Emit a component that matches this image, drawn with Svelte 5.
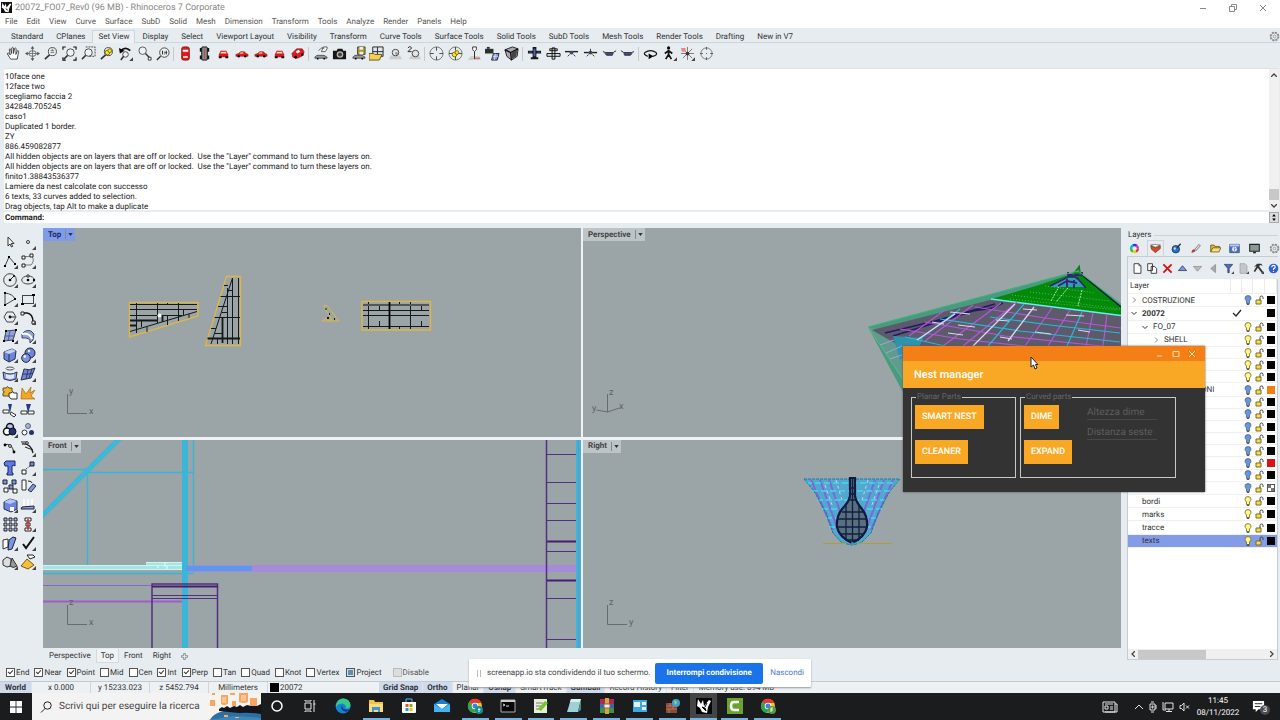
<script>
const menus = ['File', 'Edit', 'View', 'Curve', 'Surface', 'SubD', 'Solid', 'Mesh', 'Dimension', 'Transform', 'Tools', 'Analyze', 'Render', 'Panels', 'Help'];
const tabs = ['Standard', 'CPlanes', 'Set View', 'Display', 'Select', 'Viewport Layout', 'Visibility', 'Transform', 'Curve Tools', 'Surface Tools', 'Solid Tools', 'SubD Tools', 'Mesh Tools', 'Render Tools', 'Drafting', 'New in V7'];

const history = [
    '10face one',
    '12face two',
    'scegliamo faccia 2',
    '342848.705245',
    'caso1',
    'Duplicated 1 border.',
    'ZY',
    '886.459082877',
    'All hidden objects are on layers that are off or locked.  Use the "Layer" command to turn these layers on.',
    'All hidden objects are on layers that are off or locked.  Use the "Layer" command to turn these layers on.',
    'finito1.38843536377',
    'Lamiere da nest calcolate con successo',
    '6 texts, 33 curves added to selection.',
    'Drag objects, tap Alt to make a duplicate'
];

const glass = '<circle cx="10" cy="6" r="4.3" fill="#eef2f4" stroke="#444"/><path d="M7 9.5L2 14" stroke="#333" stroke-width="1.8"/>';
const corner = '<path d="M16 12v4h-4z" fill="#444"/>';
const carSide = '<path d="M2 9l3-1 2-2h4l2 2 2 1v2H2z" fill="#e01818" stroke="#7a0c0c" stroke-width=".5"/><path d="M7 7h3v1H6z" fill="#fff"/><circle cx="5" cy="11" r="1.3"/><circle cx="12" cy="11" r="1.3"/>';
const carFront = '<path d="M5 5h6l2 4v3H3V9z" fill="#d81818"/><path d="M5.5 6h5l1 2h-7z" fill="#f4d0d0"/><path d="M3 11h3v2H3zM10 11h3v2h-3z" fill="#111"/>';
const greyCar = '<path d="M2 12l2-2h8l3 2v1H2z" fill="#999" stroke="#333" stroke-width=".8"/><circle cx="5" cy="13.5" r="1"/><circle cx="12" cy="13.5" r="1"/>';
const target = '<circle cx="8" cy="8" r="7" fill="none" stroke="#777"/><path d="M8 1v4M8 11v4M1 8h4M11 8h4" stroke="#444"/>';
const heli = '<path d="M1 6l3 1h8l3-2" fill="none" stroke="#222"/><path d="M3 8h9l-1 2H5z" stroke="#222" stroke-width=".6" fill="#384094"/>';

const icons = {
    hand: '<path d="M5 14L1.5 8.5q0-1.5 1.5-1l1.5 2-1-6q.5-1.2 1.5 0L6 8l.2-6q1-1.2 1.700 0L8 8l1.200-5.500q1-.8 1.600.2L10.500 9l1.700-4q1.300-.3 1.200 1L12 14z" fill="#fff" stroke="#333" stroke-width=".9"/>',
    orbit: '<path d="M8 1v14M1 8h14" stroke="#777"/><path d="M8 0L6 3h4zM8 16l-2-3h4zM0 8l3-2v4zM16 8l-3-2v4z" fill="#555"/><ellipse cx="8" cy="8" rx="4" ry="3" fill="none" stroke="#666"/>',
    zoomDyn: glass + '<path d="M8 5h4M8 7h4M10 3v2" stroke="#555" stroke-width=".8"/>',
    zoomExt: '<circle cx="9" cy="7" r="4" fill="#eef2f4" stroke="#444"/><path d="M6 10l-4 4" stroke="#333" stroke-width="1.6"/><path d="M1 4V1h3M12 1h3v3M15 12v3h-3M1 12v3h3" fill="none" stroke="#111" stroke-width="1.2"/>',
    zoomWin: '<circle cx="8" cy="7" r="4" fill="#eef2f4" stroke="#444"/><path d="M5 10l-4 4" stroke="#333" stroke-width="1.6"/><path d="M5 1h10v10H9" fill="none" stroke="#444" stroke-dasharray="2 1"/>',
    zoomSel: glass + '<circle cx="9" cy="7" r="2.5" fill="#ffe620" stroke="#776800"/><circle cx="11.5" cy="5" r="2" fill="#ffe620" stroke="#776800"/>',
    undoView: '<path d="M3 5q5-5 10 0" fill="none" stroke="#111" stroke-width="2"/><path d="M1 2l1 6 5-3z"/><circle cx="8" cy="9" r="3" fill="#eef2f4" stroke="#444"/><path d="M6 11l-3 4" stroke="#333" stroke-width="1.6"/>' + corner,
    zoomTgt: '<circle cx="6" cy="5" r="4" fill="#eef2f4" stroke="#555"/><path d="M9 8l5 5" stroke="#333" stroke-width="1.5"/><path d="M12 12h3v3h-3z" fill="#fff" stroke="#333"/>',
    zoom11: '<circle cx="10" cy="7" r="5" fill="#eef2f4" stroke="#444"/><path d="M6 11l-4 4" stroke="#333" stroke-width="1.6"/><path d="M8 5v4M12 5v4M10 6v1M10 8v1M11 7h2" stroke="#222"/>',
    carTop: '<rect x="4" y="1" width="8" height="14" rx="2" fill="#df1c1c" stroke="#8a0f0f"/><path d="M5 4h6v2H5zM5.5 11h5v1.5h-5z" fill="#fff"/>',
    carBottom: '<rect x="5" y="1" width="6" height="14" rx="1" fill="#888" stroke="#111"/><path d="M4 2v4M12 2v4M4 10v4M12 10v4" stroke="#111" stroke-width="2"/><path d="M8 3v10" stroke="#c44"/>',
    carFront, carSide,
    carPersp: '<path d="M2 8l5-5 6 0 2 3-1 4-6 3-5-1z" fill="#df1c1c" stroke="#7a0c0c" stroke-width=".6"/><path d="M6 6l3-2 2 2-3 2z" fill="#fff"/><circle cx="6" cy="12" r="1.5"/><circle cx="13" cy="9" r="1.3"/>',
    planCar: greyCar + '<path d="M6 5q4-5 6-2M9 6h4l2-3V1h-4z" fill="#fff" stroke="#333" stroke-width=".8"/>',
    camera: '<path d="M1 5h4l1-2h5l1 2h3v9H1z" fill="#161616"/><circle cx="8.5" cy="9" r="3.5" fill="#bbb"/><circle cx="8.5" cy="9" r="2.2" fill="#444"/>',
    saveView: greyCar + '<path d="M7 1h8v8H7z" fill="#a89a28" stroke="#444"/><path d="M9 1h4v3H9zM9 6h4v3H9z" fill="#eee"/>',
    namedViews: '<path d="M4 1h11v10H4zM9 1v10M4 6h11" fill="#dfe6ec" stroke="#222"/><path d="M0 8h5l1 1h8l-3 6H0z" fill="#f3cf58" stroke="#6e5510"/>',
    sphere: '<path d="M3 10h10l2 4H1z" fill="#ccc"/><circle cx="8" cy="7" r="3.5" fill="#e4e4e4" stroke="#444"/><circle cx="9" cy="8" r="1.5" fill="#999"/>',
    sphere2: '<path d="M4 10h9l2 4H2z" fill="#ccc"/><circle cx="9" cy="8" r="3.5" fill="#e4e4e4" stroke="#444"/><path d="M1 2q2-3 4 0L1 6h4" fill="none" stroke="#222"/>',
    target,
    targetSel: target + '<circle cx="7" cy="9" r="2.5" fill="#ffe620" stroke="#776800"/><circle cx="9.5" cy="7" r="2" fill="#ffe620" stroke="#776800"/>',
    camPlane: '<path d="M1 15l3-4h9l2 4z" fill="#ccc"/><path d="M8 6v8" stroke="#222"/><path d="M8 13h6" stroke="#d44"/><path d="M6 1h4v3l-2 2-2-2z" fill="#fff" stroke="#333"/>',
    camObj: '<path d="M0 3h9v5H0z" fill="#2b302b"/><path d="M2 1h3v2H2z" fill="#2b302b"/><path d="M9 8h6l-2 7H7z" fill="#8799dc" stroke="#223"/><path d="M8 11h6M11 8l-1 7" stroke="#fff" stroke-width=".6"/>',
    cube: '<path d="M1 4l8-3 6 2-1 8-6 4-5-4z" fill="#aaa" stroke="#222"/><path d="M1 4l6 3 8-4M7 7l1 8" fill="none" stroke="#111" stroke-width="1.5"/><path d="M8 7l6-3-1 7-5 3z" fill="#444"/>',
    planeTop: '<path d="M1 5h14v3H1zM6 1h4v12H6zM4 12h8v2H4z" fill="#15181c"/><path d="M7 3h2v8H7zM2 6h3v1H2zM11 6h3v1h-3z" fill="#5464a8"/>',
    planeBottom: '<path d="M1 8h14v3H1zM6.5 2h3v12h-3zM4 3h8v2H4z" fill="#ddd" stroke="#111"/>',
    planeFront: '<path d="M1 6h14" stroke="#222" stroke-width="1.5"/><circle cx="8" cy="7" r="2" fill="#446"/><path d="M6 9l-2 2M10 9l2 2" stroke="#333"/>',
    planeBack: '<path d="M1 7h14" stroke="#222" stroke-width="1.5"/><circle cx="8" cy="7" r="2" fill="#446"/><path d="M8 3v4M6 9l-2 2M10 9l2 2" stroke="#333"/>',
    heliL: heli,
    heliR: '<g transform="matrix(-1 0 0 1 16 0)">' + heli + '</g>',
    turn: '<path d="M5 11Q0 9 2 7q6-4 12 0 2 3-4 4" fill="none" stroke="#111" stroke-width="1.3"/><path d="M6 8l5 3-5 3z"/>',
    walk: '<circle cx="7" cy="2" r="1.7"/><path d="M7 4v5l-3 5M7 9l3 5M7 5L3 8M7 5l4 3" fill="none" stroke="#111" stroke-width="1.8"/>' + corner,
    compass: '<path d="M8 1v14M1 8h14M3 3l10 10M13 3L3 13" stroke="#777"/><circle cx="8" cy="8" r="2" fill="#333"/><path d="M1 2h5v4H2z" fill="#e88"/>' + corner,
    circleDot: '<circle cx="8" cy="8" r="6" fill="none" stroke="#777"/><path d="M8 1v3M8 12v3M1 8h3M12 8h3M7.5 8h1" stroke="#555"/>',
    arrow: '<path d="M6 3v9l2-2 1.5 3 1.2-.6L9.3 9.5H12z" fill="#fff" stroke="#333"/>',
    point: '<circle cx="8" cy="8" r="1.5" fill="#fff" stroke="#333"/>' + corner,
    polyline: '<path d="M3 13l4-9 6 7" fill="none" stroke="#444"/><path d="M2 12h2v2H2zM6 3h2v2H6zM12 10h2v2h-2z"/>' + corner,
    curve: '<path d="M3 12h8q4-4 1-9L3 4" fill="none" stroke="#777"/><path d="M2 3h3v3H2zM10 1h3v3h-3zM2 11h3v3H2z" fill="#fff" stroke="#222"/>' + corner,
    circle: '<circle cx="8" cy="8" r="6.3" fill="none" stroke="#444"/><path d="M8 8l4-4" stroke="#222"/><circle cx="8" cy="8" r="1.3"/><circle cx="12" cy="4" r="1"/>' + corner,
    ellipse: '<ellipse cx="8" cy="8" rx="6.3" ry="4" fill="none" stroke="#444"/><circle cx="8" cy="8" r="1.3"/><circle cx="8" cy="4" r="1.2" fill="#fff" stroke="#222"/><circle cx="14" cy="8" r="1.2"/>' + corner,
    arc: '<path d="M3 2q8 1 10 6L3 14z" fill="none" stroke="#444"/><path d="M2 1h2v2H2zM2 13h2v2H2zM12 7h2v2h-2z"/>' + corner,
    rect: '<rect x="2.5" y="4.5" width="11" height="8" fill="none" stroke="#444"/><path d="M1 12h3v2H1zM12 3h3v2h-3z"/>' + corner,
    polygon: '<path d="M2 8l3-5h6l3 5-3 5H5z" fill="none" stroke="#444"/><circle cx="8" cy="8" r="1.4"/><path d="M8 8h5" stroke="#222"/>' + corner,
    fillet: '<path d="M3 4h4q6 1 6 9" fill="none" stroke="#111" stroke-width="1.5"/><path d="M1 3h3v3H1zM12 12h3v3h-3z" fill="#fff" stroke="#222"/>' + corner,
    patch: '<path d="M4 3l10-1-3 10-9 1z" fill="#8ea2e8" stroke="#445"/><path d="M8 3L6 13M3 8h10" stroke="#445" stroke-width=".7"/><path d="M3 2h2v2H3zM13 1h2v2h-2zM1 12h2v2H1zM10 12h2v2h-2z"/>' + corner,
    revolve: '<path d="M2 6q4-5 9-3l3 3-1 6-3 3q1-6-8-5z" fill="#8ea2e8" stroke="#445"/><path d="M2 6q8-1 10 5" fill="none" stroke="#fff" stroke-width="2"/>' + corner,
    box: '<path d="M2 5l8-3 4 2-1 8-6 3-5-3z" fill="#6c86e0" stroke="#234"/><path d="M2 5l5 2 7-3-4-2z" fill="#c4d0fa"/><path d="M7 7v8" stroke="#234"/>' + corner,
    spheres: '<circle cx="10" cy="6" r="5" fill="#6d84d8" stroke="#223"/><circle cx="6" cy="11" r="4.3" fill="#7c94e4" stroke="#223"/><circle cx="4.8" cy="9.5" r="1.2" fill="#fff"/><circle cx="9" cy="4" r="1.2" fill="#e8ecff"/>' + corner,
    loft: '<ellipse cx="8" cy="2.5" rx="4" ry="1.5" fill="none" stroke="#555"/><path d="M1 6q7 4 14 0l-1 7q-6 3-12 0z" fill="#8ea2e8" stroke="#334"/><path d="M4 8q4 2 8 0v4q-4 2-8 0z" fill="#dfe6ff"/>' + corner,
    surface: '<path d="M4 3q5 2 11-1l-4 10q-5 1-10 2z" fill="#6c86d8" stroke="#334"/><path d="M8 4L6 13M12 3L9 12M3 8q5 1 10-1" fill="none" stroke="#223" stroke-width=".7"/>' + corner,
    puzzle: '<path d="M1 3h3q1-3 3 0h3v3q3 1 0 3v2H1V8q3-1 0-2z" fill="#f2b12c" stroke="#553"/><path d="M7 8h2q1-2 3 0h3v6H9q-1-2-2-2z" fill="#fff" stroke="#333"/>',
    explode: '<path d="M1 14L2 3l4 6 5-7-1 6 5-3-4 6 4 3z" fill="#f5a623" stroke="#9a5b00" stroke-width=".6"/>',
    trim: '<path d="M1 7h6v3H1zM9 9l5 3-2 2-4-3z" fill="#fff" stroke="#333"/><path d="M10 1L8 10 6 1z" fill="#223c8c"/>',
    split: '<path d="M1 8h6v3H1zM8 8h6v3H8z" fill="#fff" stroke="#333"/><path d="M11 1L8 10 6 1z" fill="#223c8c"/>',
    group: '<circle cx="8" cy="5" r="3.5" fill="#b8c4f4" stroke="#111" stroke-width="1.5"/><circle cx="5" cy="9.5" r="3.5" fill="#fff" stroke="#111" stroke-width="1.5"/><circle cx="10.5" cy="9.5" r="3.5" fill="#223272" stroke="#111"/>' + corner,
    ungroup: '<circle cx="8" cy="4" r="2.5" fill="#9fb0ee" stroke="#667"/><circle cx="4.5" cy="10.5" r="2.5" fill="#fff" stroke="#333"/><circle cx="11.5" cy="10.5" r="2.5" fill="#223272"/>',
    editPts: '<path d="M2 4q8-3 10 8" fill="none" stroke="#222"/><circle cx="3" cy="4" r="1.4"/><circle cx="8" cy="5" r="1.4" fill="#fff" stroke="#222"/><circle cx="12" cy="11" r="1.4"/>',
    curvePts: '<path d="M2 3q9-1 11 9" fill="none" stroke="#222" stroke-width="1.3"/><path d="M1 1h6M5 6l8 3" stroke="#222"/><circle cx="7" cy="2" r="1.3" fill="#fff" stroke="#222"/>' + corner,
    text: '<path d="M2 3l2-2h9v5l-2-1-1 1v7h1v2H5v-2h1V6L3 6z" fill="#5d7ae0" stroke="#1a2a66"/>',
    move: '<path d="M2 10h4v4H2z" fill="#fff" stroke="#222"/><path d="M10 2h4v4h-4z" fill="#6c86e0" stroke="#222"/><path d="M6 9l4-3" stroke="#222" stroke-dasharray="1 1"/>' + corner,
    copy: '<path d="M1 2h4v4H1zM10 2h4v4h-4zM7 7h4v4H7z" fill="#7d95e8" stroke="#222"/><path d="M2 10h4v4H2zM11 11h4v4h-4z" fill="#fff" stroke="#222"/>',
    rotate: '<path d="M2 2h4v10H2z" fill="#fff" stroke="#333"/><path d="M8 12l5-6 3 2-5 6z" fill="#7d95e8" stroke="#333"/><path d="M8 3q4 0 4 2" fill="none" stroke="#222"/>',
    boxEdit: '<path d="M2 5l6-3 7 2v8l-6 3-7-3z" fill="#6c86e0" stroke="#234"/><path d="M2 5l6 2 7-3-7-2z" fill="#b5c4fa"/><path d="M8 10h4v4H8z" fill="#fff"/>' + corner,
    project: '<path d="M4 2v7M8 2v7M12 2v7" stroke="#fff" stroke-width="1.5"/><path d="M2 10l12-1v3H1z" fill="#8ea2e8" stroke="#223"/>' + corner,
    array: '<path d="M2 2h3v3H2zM7 2h3v3H7zM12 2h3v3h-3zM2 7h3v3H2zM7 7h3v3H7zM12 7h3v3h-3zM2 12h3v3H2zM7 12h3v3H7zM12 12h3v3h-3z" fill="#a9bbf4" stroke="#222"/>',
    align: '<path d="M5 2h6v3H5zM6 7h4v3H6zM5 12h6v3H5z" fill="#fff" stroke="#222"/><path d="M8 3v11" stroke="#e02020" stroke-width="1.5"/>' + corner,
    flow: '<path d="M1 5l5-1v8l-5 2z" fill="#fff" stroke="#333"/><path d="M7 5l4-3 3 1-4 11-4 1z" fill="#7d95e8" stroke="#223"/>' + corner,
    check: '<path d="M3 9l3 4 8-11" fill="none" stroke="#111" stroke-width="2"/>' + corner,
    mesh: '<path d="M1 6l4-3 4 2v7l-4 1-4-2z" fill="#ddd" stroke="#333"/><path d="M10 4l5 8q-4 3-7 0z" fill="#999" stroke="#333"/>' + corner,
    paint: '<path d="M1 12l6-7 7 6-6 4z" fill="#f4bf3a" stroke="#7b5a10"/><path d="M7 1h6l2 2-5 2z" fill="#fff" stroke="#222"/>' + corner,
    wheel: '<g fill="none" stroke-width="3.5" stroke-dasharray="5.4 26"><circle cx="8" cy="8" r="5" stroke="#e33"/><circle cx="8" cy="8" r="5" stroke="#ec0" stroke-dashoffset="-5.2"/><circle cx="8" cy="8" r="5" stroke="#3b3" stroke-dashoffset="-10.4"/><circle cx="8" cy="8" r="5" stroke="#0bc" stroke-dashoffset="-15.6"/><circle cx="8" cy="8" r="5" stroke="#33e" stroke-dashoffset="-20.8"/><circle cx="8" cy="8" r="5" stroke="#c3c" stroke-dashoffset="-26"/></g>',
    layers: '<path d="M1 4l7 3 7-3v4l-7 6-6-5z" fill="#e2441c" stroke="#333" stroke-width=".8"/><path d="M1 3l5-1 9 1-7 3z" fill="#fff" stroke="#333" stroke-width=".8"/>',
    globe: '<circle cx="7" cy="9" r="5.5" fill="#2a6cd0" stroke="#123"/><path d="M4 7q3-2 3 1t-3 1z" fill="#cfe4ff"/><path d="M9 7l5-6" stroke="#333" stroke-width="2"/>',
    brush: '<path d="M2 14q1-5 4-5l2 2q-1 3-6 3z" fill="#b33"/><path d="M7 9l6-7 2 2-6 7z" fill="#ddd" stroke="#555"/>',
    folder: '<path d="M1 13V3h5l1 2h7v2" fill="#e8b830" stroke="#54430c"/><path d="M1 13l3-6h12l-3 6z" fill="#fbe07a" stroke="#54430c"/>',
    help: '<path d="M1 2h14v12H1z" fill="#4a74cc" stroke="#345"/><path d="M1 2h14v3H1z" fill="#b6c9ee"/><circle cx="8" cy="9" r="3.5" fill="#eef"/><path d="M7 8q1-1.5 2 0l-1 1v2" fill="none" stroke="#236"/>',
    monitor: '<path d="M1 2h14v10H1z" fill="#8a9a94" stroke="#222" stroke-width="1.5"/><path d="M6 13h4v2H6z" fill="#222"/>',
    gear: '<circle cx="8" cy="8" r="6" fill="none" stroke="#888" stroke-width="2" stroke-dasharray="3 1.7"/><circle cx="8" cy="8" r="5" fill="none" stroke="#888"/><circle cx="8" cy="8" r="2" fill="none" stroke="#888"/>',
    newDoc: '<path d="M3 1h7l3 3v11H3z" fill="#fff" stroke="#333" stroke-width="1.3"/><path d="M10 1v3h3" fill="none" stroke="#333"/>',
    copyDoc: '<path d="M1 1h7v10H1zM6 5h5l3 3v7H6z" fill="#fff" stroke="#333" stroke-width="1.3"/>',
    cross: '<path d="M2 2l12 12M14 2L2 14" stroke="#d01010" stroke-width="2.5"/>',
    up: '<path d="M8 4l6 7H2z" fill="#7c93ea" stroke="#223"/>',
    down: '<path d="M8 12L2 5h12z" fill="#bbb" stroke="#888"/>',
    left: '<path d="M4 8l7-6v12z" fill="#aaa" stroke="#888"/>',
    filter: '<path d="M2 2h12L9 8v6H7V8z" fill="#4d68d4" stroke="#234"/>' + corner,
    sheet: '<path d="M3 1h7l3 3v11H3z" fill="#c4c8cc" stroke="#999"/>' + corner,
    hammer: '<path d="M2 5l4-4h6l2 3-4-1-1 2 6 8-2 2-6-8-4 6-2-1 4-7-1-1-1 2z" fill="#333"/>' + corner,
    question: '<circle cx="8" cy="8" r="7" fill="#2f5fd0"/><path d="M5.5 6q0-2.5 2.5-2.5T10.5 6Q10 8 8 8.5V10M8 11.5V13" fill="none" stroke="#fff" stroke-width="1.7"/>'
};

const viewTools = ['hand', 'orbit', 'zoomDyn', 'zoomExt', 'zoomWin', 'zoomSel', 'undoView', 'zoomTgt', 'zoom11', '|', 'carTop', 'carBottom', 'carFront', 'carSide', 'carSide', 'carFront', 'carPersp', '|', 'planCar', 'camera', 'saveView', 'namedViews', 'sphere', 'sphere2', '|', 'target', 'targetSel', 'camPlane', 'camObj', 'cube', '|', 'planeTop', 'planeBottom', 'planeFront', 'planeBack', 'heliL', 'heliR', '|', 'turn', 'walk', 'compass', 'circleDot'];
const sideTools = ['arrow', 'point', 'polyline', 'curve', 'circle', 'ellipse', 'arc', 'rect', 'polygon', 'fillet', 'patch', 'revolve', 'box', 'spheres', 'loft', 'surface', 'puzzle', 'explode', 'trim', 'split', 'group', 'ungroup', 'editPts', 'curvePts', 'text', 'move', 'copy', 'rotate', 'boxEdit', 'project', 'array', 'align', 'flow', 'check', 'mesh', 'paint'];
const panelTabs = ['wheel', 'layers', 'globe', 'brush', 'folder', 'help', 'monitor', 'gear'];
const layerTools = ['newDoc', 'copyDoc', 'cross', 'up', 'down', 'left', 'filter', 'sheet', 'hammer', 'question'];

const layers = [
    { name: 'COSTRUZIONE', depth: 0, arrow: 'closed', on: false },
    { name: '20072', depth: 0, arrow: 'open', current: true },
    { name: 'FO_07', depth: 1, arrow: 'open', on: true },
    { name: 'SHELL', depth: 2, arrow: 'closed', on: true },
    { name: '', depth: 2, on: true },
    { name: '', depth: 2, on: true },
    { name: '', depth: 2, on: true },
    { name: 'LAVORAZIONI', depth: 2, on: false, color: '#f57c10' },
    { name: '', depth: 0, on: false },
    { name: '', depth: 0, on: false },
    { name: '', depth: 0, on: false },
    { name: '', depth: 0, on: false },
    { name: '', depth: 0, on: false },
    { name: '', depth: 0, on: false, color: '#e01010' },
    { name: '', depth: 0, on: false },
    { name: 'tavole', depth: 0, on: false, color: 'mixed' },
    { name: 'bordi', depth: 0, on: true },
    { name: 'marks', depth: 0, on: true },
    { name: 'tracce', depth: 0, on: true },
    { name: 'texts', depth: 0, on: true, selected: true }
];

let snaps = $state([
    { name: 'End', on: true }, { name: 'Near', on: true }, { name: 'Point', on: true },
    { name: 'Mid', on: false }, { name: 'Cen', on: false }, { name: 'Int', on: true },
    { name: 'Perp', on: true }, { name: 'Tan', on: false }, { name: 'Quad', on: false },
    { name: 'Knot', on: false }, { name: 'Vertex', on: false }
]);

const modes = [
    { name: 'Grid Snap', on: true }, { name: 'Ortho', on: true }, { name: 'Planar' },
    { name: 'Osnap', on: true }, { name: 'SmartTrack' }, { name: 'Gumball', on: true },
    { name: 'Record History' }, { name: 'Filter' }
];

const chrome = '<circle cx="8" cy="8" r="7" fill="#f6c51c"/><path d="M8 8L2 4.2A7 7 0 0 1 14.5 5H8z" fill="#e33b2e"/><path d="M8 8L2 4.2A7 7 0 0 0 7 15l3-5z" fill="#2da44e"/><circle cx="8" cy="8" r="3.3" fill="#fff"/><circle cx="8" cy="8" r="2.5" fill="#3f7fe8"/>';
const apps = [
    { id: 'Cortana', art: '<circle cx="8" cy="8" r="5" fill="none" stroke="#fff" stroke-width="1.5"/>' },
    { id: 'Task View', art: '<path d="M3 5h6v6H3zM3 2v1h6V2M3 14v-1h6v1M12 2v12M11.5 6h2" fill="none" stroke="#e8e8e8"/>' },
    { id: 'Edge', art: '<circle cx="8" cy="8" r="7.5" fill="#1583d0"/><path d="M1 7Q3 0 9 .5t6.500 7q-.5 3.500-5 3 1-1 0-3-2-3-6-1.500Q2 7 1 9z" fill="#38c88c"/><path d="M7 7q-3 5 4 7 3-1 3.500-3-7 2-7.500-4z" fill="#0c3f8f"/>' },
    { id: 'Explorer', open: true, art: '<path d="M1 2h5l1 2h8v10H1z" fill="#f6c244"/><path d="M1 6h14v8H1z" fill="#ffdc74"/><path d="M4 9h8v5h-2v-2H6v2H4z" fill="#3c96dc"/>' },
    { id: 'Store', art: '<path d="M1 4h14v10q0 1-1 1H2q-1 0-1-1z" fill="#fff"/><path d="M5 4V1h6v3" fill="none" stroke="#58b7ee"/><path d="M4.5 6h3v3h-3z" fill="#f25022"/><path d="M8.5 6h3v3h-3z" fill="#7fba00"/><path d="M4.5 10h3v3h-3z" fill="#00a4ef"/><path d="M8.5 10h3v3h-3z" fill="#ffb900"/>' },
    { id: 'Mail', art: '<path d="M0 6l8-5 8 5v8H0z" fill="#1c7ed0"/><path d="M2 6h12l-6 5z" fill="#fff"/><path d="M0 6l8 5 8-5v8H0z" fill="#44b4ec"/>' },
    { id: 'Chrome', open: true, art: chrome + '<circle cx="12" cy="12" r="4" fill="#188d8d"/><path d="M12 10v4M11 11.5h2.5" stroke="#dff"/>' },
    { id: 'Terminal', open: true, art: '<path d="M1 2h14v12H1z" fill="#080808" stroke="#aaa"/><path d="M1 2h14v2H1z" fill="#ccc"/><path d="M3 6l2 1-2 1M6 8h3" fill="none" stroke="#ddd"/>' },
    { id: 'Notepad++', open: true, art: '<path d="M1 1h13v14H1z" fill="#e6efd6"/><path d="M3 5h7M3 8h6M3 11h5" stroke="#777"/><path d="M5 11l7-8 3 2-7 8z" fill="#72c62e"/>' },
    { id: 'Notebook', open: true, art: '<path d="M5 1h10l-3 13H1z" fill="#9cd1d8"/><path d="M5 1h10l-1 3H4z" fill="#d8eef0"/><path d="M12 14l3-13v11z" fill="#587"/>' },
    { id: 'Archive', open: true, art: '<path d="M1 1h14v5H1z" fill="#a92c58"/><path d="M1 6h14v4H1z" fill="#3c63b8"/><path d="M1 10h14v5H1z" fill="#3d9140"/><path d="M6 0h4v16H6z" fill="#dca43c"/><path d="M5 6h6v4H5z" fill="#eee" stroke="#864"/>' },
    { id: 'Settings', open: true, art: '<path d="M1 2h14v12H1z" fill="#3fa6e4"/><path d="M2 4h6v5H2zM10 4h4v3h-4zM10 9h4v3h-4z" fill="#dff3ff"/>' },
    { id: 'Firewall', open: true, art: '<path d="M1 5h11v10H1z" fill="#8b4a35"/><path d="M1 8h11M1 11h11M5 5v3M8 8v3M4 11v4" stroke="#c89078" stroke-width=".6"/><circle cx="11" cy="5" r="4" fill="#42a0d0"/><path d="M9 3q3-1 3 2l-2 2z" fill="#8fd06c"/>' },
    { id: 'Rhinoceros', open: true, active: true, art: '<path d="M0 0h16v16H0z" fill="#060606"/><path d="M2 1l3 5 2-4 1 6 5-6 2 1-3 6-1 6-5-1-2-4-3-2z" fill="#fff"/><path d="M6 9l3 1 1 3zM11 5l-2 4" fill="#060606" stroke="#060606"/>' },
    { id: 'Camtasia', open: true, art: '<path d="M0 0h16v16H0z" fill="#6aa42e"/><path d="M12 4H7Q4 4 4 8t3 4h5" fill="none" stroke="#fff" stroke-width="2.5"/>' },
    { id: 'Chrome profile', open: true, art: chrome + '<circle cx="12" cy="12" r="4" fill="#5b9a3a"/><path d="M11 14v-4h2M11 12h2" fill="none" stroke="#dff"/>' }
];

let altezza = $state('');
let distanza = $state('');
</script>

{#snippet icon(name, size)}
    <svg viewBox="0 0 16 16" width={size} height={size} aria-hidden="true">{@html icons[name]}</svg>
{/snippet}

{#snippet viewLabel(name, active)}
    <div class="view-label" class:active>
        <span>{name}</span>
        <button aria-label="{name} menu"><svg viewBox="0 0 6 4" width="5" height="3"><path d="M0 0h6L3 4z" fill="#333" /></svg></button>
    </div>
{/snippet}

<div class="app">
    <header class="title-bar">
        <svg viewBox="0 0 16 16" width="11" height="11"><path d="M0 0h16v16H0z" fill="#111" /><path d="M2 1l3 5 2-4 1 6 5-6 2 1-3 6-1 6-5-1-2-4-3-2z" fill="#fff" /><path d="M6 9l3 1 1 3z" /></svg>
        <h1>20072_FO07_Rev0 (96 MB) - Rhinoceros 7 Corporate</h1>
        <div class="win-buttons">
            <button aria-label="Minimize"><svg viewBox="0 0 8 8" width="8" height="8"><path d="M1 4.5h6" /></svg></button>
            <button aria-label="Restore"><svg viewBox="0 0 8 8" width="8" height="8"><path d="M.5 2.5h5v5h-5zM2.5 2.5v-2h5v5h-2" /></svg></button>
            <button aria-label="Close"><svg viewBox="0 0 8 8" width="8" height="8"><path d="M1 1l6 6M7 1L1 7" /></svg></button>
        </div>
    </header>

    <nav class="menu-bar">
        {#each menus as menu}
            <button>{menu}</button>
        {/each}
    </nav>

    <div class="tool-tabs">
        {#each tabs as tab}
            <button class:active={tab === 'Set View'}>{tab}</button>
        {/each}
        <button class="options" aria-label="Options">{@render icon('gear', 11)}</button>
    </div>

    <div class="toolbar">
        {#each viewTools as tool}
            {#if tool === '|'}
                <i></i>
            {:else}
                <button aria-label={tool}>{@render icon(tool, 15)}</button>
            {/if}
        {/each}
    </div>

    <section class="history">
        <div class="lines">
            {#each history as line}
                <p>{line}</p>
            {/each}
        </div>
        <div class="scroll-y">
            <svg viewBox="0 0 6 4" width="6" height="4"><path d="M0 4l3-3 3 3" /></svg>
            <span></span>
            <svg viewBox="0 0 6 4" width="6" height="4"><path d="M0 0l3 3 3-3" /></svg>
        </div>
    </section>

    <div class="command">
        <label for="cmd">Command:</label>
        <input id="cmd" type="text" />
        <button aria-label="Previous commands"><svg viewBox="0 0 8 10" width="8" height="9"><path d="M4 1l2 3H2zM4 9L2 6h4z" /></svg></button>
    </div>

    <main>
        <aside class="side-tools">
            {#each sideTools as tool}
                <button aria-label={tool}>{@render icon(tool, 16)}</button>
            {/each}
        </aside>

        <div class="views">
            <section class="view">
                <svg class="scene" viewBox="43 228 538 209" preserveAspectRatio="xMinYMin slice">
                    <g fill="none" stroke="#dcb648" stroke-width="1.4">
                        <path d="M129.500 302.500H198V316l-68.500 21zM226.500 276.500h14v69h-35zM362 301.500h68.500v28.500H362z" />
                        <path d="M324 305.500h3l12 15.500h-17l4-3 1 2h5l-8-13z" stroke-width="1" />
                    </g>
                    <g fill="none" stroke="#15181a">
                        <path d="M130 304.500h67M130 309.500h67M130 315.500h52M130 331.500l67-20M136.500 303v30M157.500 303v20M178.500 303v18M167.500 303v2M183.500 310v5M189 314v4M167.500 315v10M141.500 320v7M147 327v5" />
                        <path d="M130 320.500h27M130 325.500h6M162.500 315v7" stroke-width="1.8" />
                        <path d="M232.500 278l-21.500 66M232.500 278v66M238.500 278v66M227.500 288v56M220.500 296.500H240M214.500 317.500H240M224 285.500h4M227 290.500h5M218 306.500h9M222 312.500h5M211 328.500h5M215 333.500h8M217.500 338v6" />
                        <path d="M207.500 338.500H240M222.500 317v26" stroke-width="1.8" />
                        <path d="M363 310.500h66M363 315.500h66M363 326.500h66M368.500 302v27M410.500 302v27M379.500 305v5M421.500 305v5M379.500 321v5M421.500 321v5M399.500 302v3M399.500 326v3" />
                        <path d="M363 305h66" stroke="#555" stroke-width="2" />
                        <path d="M389.500 302v27" stroke="#000" stroke-width="1.8" />
                        <path d="M329 314h1M327 318h2M334 319h1M325.500 309h1" stroke-width="2" />
                    </g>
                    <circle cx="159.500" cy="315.500" r="2" fill="#fff" />
                    <path class="axis" d="M67.500 394v19.500H87" />
                    <text x="69" y="394">y</text><text x="89" y="414">x</text>
                </svg>
                {@render viewLabel('Top', true)}
            </section>

            <section class="view">
                <svg class="scene" viewBox="583 228 538 209" preserveAspectRatio="xMinYMin slice">
                    <path d="M868 327L1078 271l43 33v120H920z" fill="#4a9a80" />
                    <path d="M868 327l52 80 20-8V346z" fill="#5f9c8c" />
                    <path d="M872 330l122-31 127 17v90H950l-50-60z" fill="#5d5a6c" />
                    <path d="M893 336l80-25 20-3 10-5M885 333l50-12 60-17" stroke="#221a66" fill="none" stroke-width="1.5" />
                    <path d="M893 336l30 2-5 12-18 10z" fill="#2e94ac" />
                    <path d="M991 299l48-14 39-13 43 34v9.500z" fill="#048a0a" />
                    <path d="M1010 299l108 11M1030 292l80 9M1045 286l50 7M1012 295l108 14" stroke="#48c048" stroke-dasharray="1 2" fill="none" />
                    <path d="M1068 288l-12 14M1051 301l10-18M1082 290l-4 16" stroke="#a9f0a9" stroke-dasharray="2 1" />
                    <path d="M1050 287l18-9h8l10 9z" fill="#2f9fae" />
                    <path d="M1050 286l18-9q6-2 10 2l8 9M1058 286l9-5 10 2M1067 279v8M1074 280v8M1068 272v3h14v-3" stroke="#38207c" fill="none" stroke-width="1.8" />
                    <path d="M1073 275l6-8 1 8" stroke="#127a1c" stroke-width="2" fill="none" />
                    <path d="M1083 276l38 31" stroke="#142434" stroke-width="1.6" />
                    <path d="M868 327L1078 271l43 33" fill="none" stroke="#38b47c" />
                    <path d="M991 299l130 16.500" stroke="#64f0ee" stroke-width="1.5" />
                    <g stroke="#b458d4" stroke-width="1.2" fill="none">
                        <path d="M945 310l-36 26M973 305l-48 36M1001 303l-58 43M1017 302l-54 44M1052 308l-27 38M1070 310l-22 36M1093 313l-7 33M1107 314l-4 32" />
                        <path d="M900 329l60 10 90 10M925 322l80 14 116 12M975 307l70 11 76 10" />
                    </g>
                    <g stroke="#28b8d8" stroke-width="1.2" fill="none">
                        <path d="M960 309l-40 30M1024 304l-36 42M1082 312l-15 34" />
                        <path d="M905 337l40 9M940 319l80 12 100 11M990 317l60 8 70 8" />
                    </g>
                    <path d="M1015 304l-42 42M1034 307l-26 34M955 314l-38 26" stroke="#dcd4f4" stroke-width="1.3" />
                    <path d="M932 322l12 2M950 312l20 2M996 320l13 1M1023 309l14 1M1066 315l18 1M948 333l15 2M1000 337l12 2M1035 332l16 2M1078 330l12 2M958 325l17 2" stroke="#dcd8ec" stroke-width="1.2" />
                    <path d="M880 345l14-5M886 353l16-7M890 359l12-4" stroke="#a69cf0" />
                    <path d="M868 327l35 52" stroke="#58b888" />
                    <path class="axis" d="M607.500 394v18l12-4M607.500 412l-11-2" />
                    <text x="609" y="395">z</text><text x="619" y="409">x</text><text x="592" y="411">y</text>
                </svg>
                {@render viewLabel('Perspective', false)}
            </section>

            <section class="view">
                <svg class="scene" viewBox="43 440 538 209" preserveAspectRatio="xMinYMin slice">
                    <path d="M43 469.500h44M87.500 472v93M87 472.500h106M193.500 440v133M43 573.500h150" stroke="#32b6dc" stroke-width="1.3" fill="none" />
                    <path d="M122 436L40 518" stroke="#42b4d4" stroke-width="5" />
                    <path d="M122 436L40 518" stroke="#2cc4e4" stroke-width="1" />
                    <path d="M43 585.500h108" stroke="#9264c4" />
                    <path d="M43 601.500h140" stroke="#a05cd0" stroke-width="2" />
                    <path d="M185 565h396v7H185z" fill="#a68cd8" />
                    <path d="M182 440h6v209h-6z" fill="#3cb6d8" />
                    <path d="M186 566h66v5h-66z" fill="#5c98ee" />
                    <path d="M43 565h139v5H43zM146 562h36v3h-36z" fill="#a6e4e4" />
                    <path d="M43 565.500h139M43 569.500h139M146 562.500h36" stroke="#c8f8f4" />
                    <path d="M165 563v4M158 566v2M167 566v3" stroke="#efffff" />
                    <path d="M152 649v-65h65.500v65" fill="none" stroke="#523080" stroke-width="1.5" />
                    <path d="M152 586.500h66" stroke="#461c70" stroke-width="2" />
                    <path d="M152 595.500h66M152 598.500h66M546 454.500h31M546 482.500h31M546 503.500h31M546 520.500h31M546 551.500h31M546 598.500h31M546 639.500h31" stroke="#523080" />
                    <path d="M546 541.500h31M546 580.500h31" stroke="#461c70" stroke-width="2" />
                    <path d="M546.500 440v209" stroke="#523080" stroke-width="1.5" />
                    <path d="M576 440h5v209h-5z" fill="#3cb6d8" />
                    <path d="M578.500 440v209" stroke="#6e8cc8" />
                    <path class="axis" d="M67.500 605v19.500H87" />
                    <text x="69" y="605">z</text><text x="89" y="625">x</text>
                </svg>
                {@render viewLabel('Front', false)}
            </section>

            <section class="view">
                <svg class="scene" viewBox="583 440 538 209" preserveAspectRatio="xMinYMin slice">
                    <path d="M804 479h96l-10 12-12 22-7 20-10 10-9 2-10-2-9-10-7-20-12-22z" fill="#54a8d0" />
                    <path d="M811 480l22 50M820 480l18 50M829 480l12 34M893 480l-22 50M884 480l-18 50M875 480l-12 34" stroke="#7c68d8" stroke-width="2" />
                    <path d="M806 483h92M812 491h80M817 500h70M822 509h60M826 518h52M829 527h46" stroke="#42dcea" stroke-width="1.3" stroke-dasharray="6 3" />
                    <path d="M836 480l6 20M868 480l-6 20M825 485l7 20M879 485l-7 20" stroke="#d8c8fc" stroke-dasharray="3 3" />
                    <path d="M804 479h96l-10 12-12 22-7 20-10 10-9 2-10-2-9-10-7-20-12-22z" fill="none" stroke="#1c7c9a" stroke-dasharray="3 1" />
                    <path d="M850 478h5v18q1 6 7 13 6 8 5 18-2 10-15 16-13-6-15-16-1-10 5-18 7-7 8-13z" fill="#56707e" stroke="#101a40" stroke-width="2.2" />
                    <path d="M852.500 478v66M846 506v34M859 506v34M842 512h21M838 519h28M838 527h28M840 534h24M847 540h12M848 500h9M849 494h7M849 488h7" stroke="#141c44" stroke-width="1.3" />
                    <path d="M823 543.500h23M858 543.500h34" stroke="#b09c3c" />
                    <circle cx="852.500" cy="543.500" r="1.5" fill="#39a4a4" />
                    <path class="axis" d="M607.500 605v19.500H627" />
                    <text x="609" y="605">z</text><text x="629" y="625">y</text>
                </svg>
                {@render viewLabel('Right', false)}
            </section>
        </div>

        <aside class="panel">
            <h2><span>Layers</span></h2>
            <div class="panel-tabs">
                {#each panelTabs as tab}
                    <button class:active={tab === 'layers'} aria-label={tab}>{@render icon(tab, 11)}</button>
                {/each}
            </div>
            <div class="panel-body">
                <div class="layer-tools">
                    {#each layerTools as tool}
                        <button aria-label={tool}>{@render icon(tool, 11)}</button>
                    {/each}
                </div>
                <table>
                    <thead>
                        <tr><th>Layer</th><th></th><th></th><th></th><th></th></tr>
                    </thead>
                    <tbody>
                        {#each layers as layer}
                            <tr class:selected={layer.selected} class:current={layer.current}>
                                <td>
                                    <span class="name depth{layer.depth}">
                                        <svg viewBox="0 0 6 6" width="6" height="6">
                                            {#if layer.arrow === 'open'}
                                                <path d="M.5 2L3 4.5 5.5 2" />
                                            {:else if layer.arrow === 'closed'}
                                                <path d="M2 .5L4.5 3 2 5.5" class="light" />
                                            {/if}
                                        </svg>
                                        {layer.name}
                                    </span>
                                </td>
                                <td>
                                    {#if layer.current}
                                        <svg viewBox="0 0 10 8" width="10" height="8"><path d="M1 4l3 3 5-6" class="tick" /></svg>
                                    {/if}
                                </td>
                                <td>
                                    {#if !layer.current}
                                        <svg viewBox="0 0 8 10" width="8" height="10"><path d="M4 .6Q7 .6 7 3.2 7 4.5 5.5 6v2.5h-3V6Q1 4.5 1 3.2 1 .6 4 .6z" fill={layer.on ? '#fff68c' : '#6a96d4'} stroke={layer.on ? '#6e6420' : '#4a6490'} stroke-width=".8" /><path d="M2.8 9.3h2.4" stroke="#333" /></svg>
                                    {/if}
                                </td>
                                <td>
                                    {#if !layer.current}
                                        <svg viewBox="0 0 9 10" width="9" height="10"><path d="M1 5h5v4H1z" fill="#f6dc50" stroke="#7e6c1a" /><path d="M5 5V2.5Q5 1 6.500 1T8 2.500V4" fill="none" stroke="#444" /></svg>
                                    {/if}
                                </td>
                                <td>
                                    <span class="swatch" class:mixed={layer.color === 'mixed'} style:background-color={layer.color === 'mixed' ? '#fff' : (layer.color ?? '#000')}></span>
                                </td>
                            </tr>
                        {/each}
                    </tbody>
                </table>
                <div class="scroll-x">
                    <svg viewBox="0 0 4 6" width="4" height="6"><path d="M4 0L1 3l3 3" /></svg>
                    <span></span>
                    <svg viewBox="0 0 4 6" width="4" height="6"><path d="M0 0l3 3-3 3" /></svg>
                </div>
            </div>
        </aside>
    </main>

    <nav class="view-tabs">
        <button>Perspective</button>
        <button class="active">Top</button>
        <button>Front</button>
        <button>Right</button>
        <button aria-label="New viewport"><svg viewBox="0 0 8 8" width="7" height="7"><path d="M3 .5h2V3h2.5v2H5v2.5H3V5H.5V3H3z" fill="none" stroke="#888" /></svg></button>
    </nav>

    <div class="osnaps">
        {#each snaps as snap}
            <label><input type="checkbox" bind:checked={snap.on} />{snap.name}</label>
        {/each}
        <label class="project"><input type="checkbox" class="filled" />Project</label>
        <label class="disable"><input type="checkbox" class="dim" />Disable</label>
    </div>

    <footer class="status">
        <button class="world on">World</button>
        <span class="cell">x 0.000</span>
        <span class="cell">y 15233.023</span>
        <span class="cell">z 5452.794</span>
        <span class="cell">Millimeters</span>
        <span class="layer"><b></b>20072</span>
        {#each modes as mode}
            <button class:on={mode.on}>{mode.name}</button>
        {/each}
        <span class="memory">Memory use: 894 MB</span>
    </footer>

    <div class="taskbar">
        <button class="start" aria-label="Start"><svg viewBox="0 0 12 12" width="12" height="12"><path d="M0 0h5.6v5.6H0zM6.4 0H12v5.6H6.4zM0 6.4h5.6V12H0zM6.4 6.4H12V12H6.4z" fill="#fff" /></svg></button>
        <div class="search">
            <svg viewBox="0 0 12 12" width="12" height="12"><circle cx="7.5" cy="4.5" r="3.7" fill="none" stroke="#222" /><path d="M5 7.5L1 11.5" stroke="#222" /></svg>
            <input type="text" aria-label="Search" placeholder="Scrivi qui per eseguire la ricerca" />
            <svg viewBox="0 0 53 27" width="53" height="27">
                <path d="M0 0h53v27H0z" fill="#f6f3ee" />
                <path d="M2 27q4-9 22-10l29-3v13z" fill="#2c6fa0" />
                <path d="M0 27q8-1 18-3t35 1v2z" fill="#3e86b8" />
                <path d="M11 16l3-2 2 1 3-2 3 2 4-2 3 1 3-2 3 2 4-2 4 1 3-2 3 2 4-2v10q-12-2-22-1-10-1-20-2z" fill="#14151c" />
                <path d="M13 2h7v9q-4 2-7 0zM2 7h5v6H2zM31 0h9v9q-4 2-9 0zM42 5h7v8h-7zM24 8h4v5h-4zM22 0h5v2h-5zM4 0h3v2H4z" fill="#f7a562" />
                <path d="M14 4h4v6h-4zM33 2h5v6h-5z" fill="#fcc590" />
                <path d="M16 22h4v2h-4zM27 24h4v1h-4z" fill="#f0b070" />
            </svg>
        </div>
        <div class="apps">
            {#each apps as app}
                <button class:open={app.open} class:active={app.active} aria-label={app.id}><svg viewBox="0 0 16 16" width="16" height="16">{@html app.art}</svg></button>
            {/each}
        </div>
        <div class="tray">
            <svg viewBox="0 0 16 12" width="16" height="12"><path d="M1 1h12v10H1zM13 3h2v8H3M3 3h8M3 5h3v3H3zM8 6h3M8 8h3" /></svg>
            <svg class="chev" viewBox="0 0 8 6" width="8" height="6"><path d="M0 5l4-4 4 4" /></svg>
            <svg viewBox="0 0 9 12" width="9" height="12"><path d="M2 3h5v6H2zM3 1h3M3 11h3M8 4v4M4 5h1v2H4z" /></svg>
            <svg viewBox="0 0 12 12" width="12" height="12"><path d="M3 2h8v6H3zM7 8v2M4 10.5h6M1 1v8h3" /></svg>
            <svg viewBox="0 0 11 10" width="11" height="10"><path d="M1 3.5h1.5L5 1v8L2.5 6.5H1zM7 3.5l3 3M10 3.5l-3 3" /></svg>
            <time><span>11:45</span><span>08/11/2022</span></time>
            <div class="notes">
                <svg viewBox="0 0 14 14" width="13" height="13"><path d="M1 1h12v9H7l-3 3v-3H1z" fill="#fff" stroke="none" /><path d="M3 4h8M3 7h6" stroke="#222" /></svg>
                <span>3</span>
            </div>
        </div>
    </div>

    <div class="share">
        <i></i>
        <p>screenapp.io sta condividendo il tuo schermo.</p>
        <button>Interrompi condivisione</button>
        <a href="#hide">Nascondi</a>
    </div>

    <div class="dialog" role="dialog" aria-label="Nest manager">
        <div class="dialog-bar">
            <button aria-label="Minimize"><svg viewBox="0 0 8 8" width="8" height="8"><path d="M1 6h5" /></svg></button>
            <button aria-label="Maximize"><svg viewBox="0 0 8 8" width="8" height="8"><path d="M1 1.5h6v5H1z" /></svg></button>
            <button aria-label="Close"><svg viewBox="0 0 8 8" width="8" height="8"><path d="M1 1l6 6M7 1L1 7" /></svg></button>
        </div>
        <h2>Nest manager</h2>
        <div class="dialog-body">
            <fieldset class="planar">
                <legend>Planar Parts</legend>
                <button>SMART NEST</button>
                <button>CLEANER</button>
            </fieldset>
            <fieldset class="curved">
                <legend>Curved parts</legend>
                <div>
                    <button>DIME</button>
                    <button>EXPAND</button>
                </div>
                <div class="fields">
                    <input type="text" aria-label="Altezza dime" placeholder="Altezza dime" bind:value={altezza} />
                    <input type="text" aria-label="Distanza seste" placeholder="Distanza seste" bind:value={distanza} />
                </div>
            </fieldset>
        </div>
        <svg class="cursor" viewBox="0 0 9 14" width="9" height="14"><path d="M1 1v10l2.5-2 1.5 4 2-1-1.5-3.5H8z" fill="#fff" stroke="#222" /></svg>
    </div>
</div>

<style>
:global(body) {
    margin: 0;
}

.app {
    position: relative;
    display: flex;
    flex-direction: column;
    height: 100vh;
    overflow: hidden;
    background: #e7ecf0;
    color: #333;
    font-family: Roboto, 'Liberation Sans', sans-serif;
    font-size: 8px;
    line-height: 10px;
    text-rendering: geometricPrecision;
}

button, input {
    margin: 0;
    padding: 0;
    border: 0;
    border-radius: 0;
    background: none;
    color: inherit;
    font: inherit;
    text-rendering: inherit;
    outline: none;
}

button {
    white-space: nowrap;
}

h1, h2, p {
    margin: 0;
    font-size: inherit;
    font-weight: normal;
}

svg {
    display: block;
    flex: none;
}

.title-bar {
    display: flex;
    align-items: center;
    gap: 3px;
    height: 15px;
    padding: 0 13px 0 1px;
    background: #fff;
    color: #888;
    flex: none;
}
.title-bar h1 {
    font-size: 9px;
}

.win-buttons {
    display: flex;
    gap: 22px;
    margin-left: auto;
}
.win-buttons path {
    fill: none;
    stroke: #888;
}

.menu-bar {
    display: flex;
    align-items: center;
    gap: 9px;
    height: 13px;
    padding: 1px 0 0 5px;
    box-sizing: border-box;
    background: #fff;
    color: #555;
    flex: none;
}

.tool-tabs {
    display: flex;
    height: 15px;
    padding: 2px 0 0 4px;
    box-sizing: border-box;
    border-bottom: 1px solid #cfd6db;
    flex: none;
}
.tool-tabs button {
    padding: 1px 6px 0 7px;
    height: 13px;
}
.tool-tabs .active {
    background: #edf1f4;
    border: 1px solid #cfd6db;
    border-bottom: 0;
    padding: 0 5px 0 6px;
}
.tool-tabs .options {
    margin-left: auto;
    padding: 0;
}

.toolbar {
    display: flex;
    align-items: center;
    width: 712px;
    height: 21px;
    margin: 0 0 4px 4px;
    flex: none;
}
.toolbar button {
    flex: 1;
    display: flex;
    justify-content: center;
}
.toolbar i {
    width: 1px;
    height: 14px;
    margin: 0 2px 0 1px;
    background: #c4cacf;
}

.history {
    display: flex;
    height: 142px;
    margin: 0 1px 0 4px;
    background: #fff;
    border-top: 1px solid #dde3e7;
    box-sizing: border-box;
    flex: none;
}
.history .lines {
    flex: 1;
    padding: 3px 0 0 1px;
    color: #222;
}
.history p {
    white-space: pre-wrap;
}

.scroll-y {
    display: flex;
    flex-direction: column;
    align-items: center;
    width: 10px;
    padding: 4px 0 2px;
    box-sizing: border-box;
    background: #f0f0f0;
}
.scroll-y span {
    width: 10px;
    height: 11px;
    margin: auto 0 4px;
    background: #c8c8c8;
}
.scroll-y path, .scroll-x path {
    fill: none;
    stroke: #444;
    stroke-width: 1.3;
}

.command {
    display: flex;
    align-items: center;
    height: 11px;
    margin: 2px 1px 5px 4px;
    padding-left: 1px;
    background: #fff;
    flex: none;
}
.command label {
    font-weight: bold;
    color: #222;
}
.command input {
    flex: 1;
    height: 11px;
}
.command button {
    background: #ddd;
    border: 1px solid #aaa;
    box-sizing: border-box;
}

main {
    display: flex;
    flex: 1;
    min-height: 0;
}

.side-tools {
    display: grid;
    grid-template-columns: 18px 18px;
    grid-template-rows: repeat(18, 1fr);
    justify-content: center;
    align-items: center;
    width: 38px;
    height: 338px;
    margin: 5px 5px 0 0;
    flex: none;
}
.side-tools button {
    display: flex;
    justify-content: center;
}

.views {
    display: grid;
    grid-template-columns: 1fr 1fr;
    grid-template-rows: 1fr 1fr;
    gap: 3px 2px;
    flex: 1;
    min-width: 0;
    background: #eef2f5;
}

.view {
    position: relative;
    overflow: hidden;
    background: #9ba4a6;
}
.scene {
    position: absolute;
    inset: 0;
    width: 100%;
    height: 100%;
}
.scene text {
    font-size: 9px;
    fill: #5a6163;
}
.axis {
    fill: none;
    stroke: #666d6f;
}

.view-label {
    position: absolute;
    left: 0;
    top: 0;
    display: flex;
    align-items: center;
    height: 13px;
    padding-left: 5px;
    background: #bdc4c7;
    color: #444;
    font-weight: bold;
}
.view-label button {
    margin-left: 4px;
    padding: 3px 2px;
    border-left: 1px solid #888;
}
.view-label.active {
    background: #7f9bec;
    color: #1c2a5c;
}

.panel {
    display: flex;
    flex-direction: column;
    width: 151px;
    margin: 2px 2px -12px 6px;
    flex: none;
}
.panel h2 {
    display: flex;
    align-items: center;
    gap: 3px;
    padding-left: 1px;
}
.panel h2::after {
    content: '';
    flex: 1;
    border-top: 1px solid #ccd3d8;
}
.panel-tabs {
    display: flex;
    height: 16px;
    margin-right: -8px;
}
.panel-tabs button {
    flex: 1;
    display: flex;
    align-items: center;
    justify-content: center;
    margin-right: 4px;
}
.panel-tabs .active {
    border: 1px solid #cdd4d9;
    border-bottom: 0;
}

.panel-body {
    display: flex;
    flex-direction: column;
    flex: 1;
    border: 1px solid #c6cdd2;
    background: #fff;
}
.layer-tools {
    display: flex;
    height: 22px;
    padding: 0 0 0 2px;
    margin-right: -4px;
    background: #e7ecf0;
}
.layer-tools button {
    flex: 1;
    display: flex;
    align-items: center;
    justify-content: center;
}

table {
    width: 100%;
    height: 269px;
    border-collapse: collapse;
    table-layout: fixed;
}
th, td {
    padding: 0;
    text-align: left;
    border-bottom: 1px solid #f0f0f0;
}
th {
    height: 14px;
    padding-left: 2px;
    font-weight: normal;
    box-shadow: inset -1px 0 #f1e9e9;
}
th:nth-child(n + 2) {
    width: 11px;
    padding: 0;
}
th:nth-child(n + 4) {
    width: 12px;
}
td:nth-child(n + 2) svg, .swatch {
    margin: 0 auto;
}
.name {
    display: flex;
    align-items: center;
    gap: 5px;
    padding-left: 3px;
    line-height: 11px;
    white-space: nowrap;
}
.depth1 {
    padding-left: 14px;
}
.depth2 {
    padding-left: 25px;
}
.name path {
    fill: none;
    stroke: #333;
}
.name .light {
    stroke: #888;
}
.tick {
    fill: none;
    stroke: #222;
    stroke-width: 1.3;
}
.current {
    font-weight: bold;
}
.selected {
    background: #849be8;
}
.swatch {
    display: block;
    width: 8px;
    height: 8px;
}
.swatch.mixed {
    box-sizing: border-box;
    border: 1px solid #555;
    background-image: conic-gradient(#fff 25%, #777 0 50%, #fff 0 75%, #777 0);
}

.scroll-x {
    display: flex;
    align-items: center;
    height: 10px;
    margin-top: auto;
    padding: 0 3px;
    background: #f0f0f0;
}
.scroll-x span {
    width: 68px;
    height: 9px;
    margin: 0 auto 0 3px;
    background: #c8c8c8;
}

.view-tabs {
    display: flex;
    align-items: center;
    height: 16px;
    padding-left: 44px;
    flex: none;
}
.view-tabs button {
    height: 12px;
    padding: 0 5px;
}
.view-tabs .active {
    height: 14px;
    background: #f0f3f6;
    border: 1px solid #d4dade;
    border-top: 0;
    padding: 0 4px;
}

.osnaps {
    display: flex;
    align-items: center;
    gap: 5px;
    height: 17px;
    padding-left: 6px;
    flex: none;
}
.osnaps label {
    display: flex;
    align-items: center;
    gap: 1px;
}
.osnaps input {
    appearance: none;
    width: 9px;
    height: 9px;
    border: 1px solid #555;
    box-sizing: border-box;
    background: #fff;
}
.osnaps input:checked {
    position: relative;
}
.osnaps input:checked::after {
    content: '';
    position: absolute;
    left: 2px;
    top: 0;
    width: 2px;
    height: 4px;
    border: solid #333;
    border-width: 0 1px 1px 0;
    transform: rotate(42deg);
}
.osnaps .filled {
    background: #5f8fae;
    box-shadow: inset 0 0 0 1px #cfe0ea;
}
.osnaps .dim {
    border-color: #bbb;
    background: #ddd;
}
.project {
    margin-left: 2px;
}
.disable {
    margin-left: 6px;
    color: #555;
}

.status {
    display: flex;
    height: 12px;
    line-height: 12px;
    border-top: 1px solid #c4cbd0;
    box-sizing: border-box;
    background: #edf1f4;
    flex: none;
}
.status .on {
    background: #cfdaee;
    font-weight: bold;
}
.status .world {
    width: 32px;
    padding: 0;
}
.status .cell {
    width: 58px;
    border-right: 1px solid #d0d5d9;
    text-align: center;
}
.status .layer {
    display: flex;
    align-items: center;
    gap: 1px;
    width: 111px;
    padding-left: 2px;
    box-sizing: border-box;
}
.layer b {
    width: 9px;
    height: 9px;
    background: #000;
}
.status button {
    padding: 0 4px;
    border-right: 1px solid #dfe4e8;
}
.memory {
    padding-left: 5px;
}

.taskbar {
    display: flex;
    height: 27px;
    background: #1b1c1e;
    flex: none;
}
.start {
    width: 32px;
    display: flex;
    align-items: center;
    justify-content: center;
}
.search {
    display: flex;
    align-items: center;
    width: 229px;
    padding-left: 8px;
    box-sizing: border-box;
    background: #f3f3f3;
    flex: none;
}
.search input {
    flex: 1;
    min-width: 0;
    padding-left: 7px;
    font-size: 10px;
}
.search input::placeholder {
    color: #444;
    opacity: 1;
}
.apps {
    display: flex;
    width: 523px;
}
.apps button {
    flex: 1;
    display: flex;
    align-items: center;
    justify-content: center;
    margin: 0 3px;
    border-bottom: 2px solid transparent;
}
.apps .open {
    border-bottom-color: #76b4e0;
}
.apps .active {
    margin: 0 1px;
    background-color: #434446;
}

.tray {
    display: flex;
    align-items: center;
    gap: 5px;
    margin-left: auto;
    padding-right: 15px;
    color: #fff;
}
.tray svg {
    fill: none;
    stroke: #e4e4e4;
}
.chev {
    margin-left: 12px;
}
.tray time {
    display: flex;
    flex-direction: column;
    width: 46px;
    gap: 2px;
    text-align: center;
}
.notes {
    position: relative;
    padding-left: 6px;
}
.notes span {
    position: absolute;
    right: -5px;
    top: 5px;
    width: 10px;
    height: 10px;
    border-radius: 50%;
    background: #4a4b4d;
    text-align: center;
}

.share {
    position: absolute;
    left: 50%;
    bottom: 33px;
    transform: translateX(-50%);
    display: flex;
    align-items: center;
    width: 342px;
    height: 28px;
    padding: 0 7px 0 8px;
    box-sizing: border-box;
    background: #fff;
    box-shadow: 0 1px 2px #999;
    border-radius: 1px;
    color: #444;
    white-space: nowrap;
}
.share i {
    width: 2px;
    height: 7px;
    margin-right: 6px;
    border: solid #bbb;
    border-width: 0 1px;
}
.share button {
    width: 108px;
    height: 21px;
    margin: 0 7px 0 auto;
    border-radius: 2px;
    background: #1a73e8;
    color: #fff;
    font-weight: bold;
}
.share a {
    color: #4a7cc8;
    text-decoration: none;
}

.dialog {
    position: absolute;
    left: 903px;
    top: 346px;
    width: 302px;
    background: #333;
    box-shadow: 0 0 2px #555;
}
.dialog-bar {
    display: flex;
    justify-content: flex-end;
    align-items: center;
    gap: 8px;
    height: 15px;
    padding-right: 9px;
    background: #f57f17;
}
.dialog-bar path {
    fill: none;
    stroke: #ffe0b0;
}
.dialog h2 {
    height: 27px;
    padding-left: 11px;
    background: #f9a825;
    color: #fff;
    font-size: 11px;
    font-weight: 500;
    line-height: 27px;
}
.dialog-body {
    display: flex;
    gap: 4px;
    padding: 4px 8px 14px;
}
.dialog fieldset {
    margin: 0;
    padding: 3px 3px 13px;
    border: 1px solid #c8c8c8;
    box-sizing: border-box;
    height: 86px;
}
.dialog legend {
    margin-left: 1px;
    padding: 0 1px;
    color: #666;
}
.dialog fieldset button {
    display: block;
    height: 24px;
    margin-bottom: 11px;
    padding: 0 7px;
    background: #f9a825;
    color: #fff;
    font-size: 9px;
    font-weight: 500;
}
.planar {
    width: 105px;
}
.curved {
    display: flex;
    gap: 15px;
    width: 156px;
}
.fields {
    display: flex;
    flex-direction: column;
    gap: 5px;
}
.fields input {
    width: 70px;
    height: 14px;
    border-bottom: 1px solid #484848;
    font-size: 10px;
}
.fields input::placeholder {
    color: #5e5e5e;
    opacity: 1;
}
.cursor {
    position: absolute;
    left: 127px;
    top: 10px;
}
</style>
